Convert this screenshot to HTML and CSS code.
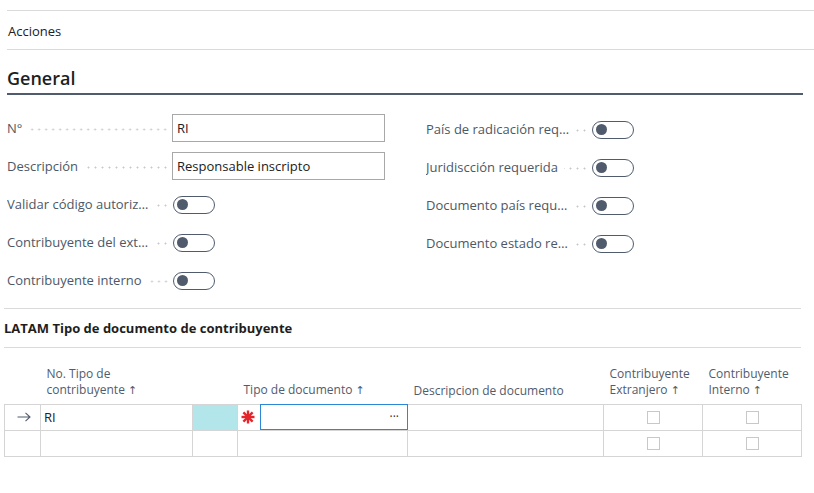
FILE: index.html
```html
<!DOCTYPE html>
<html lang="es">
<head>
<meta charset="utf-8">
<title>Tipo de contribuyente</title>
<link rel="stylesheet" href="styles.css">
</head>
<body>
<div class="page">
  <div class="actions">Acciones</div>

  <section class="general">
    <h2 class="section-title">General</h2>
    <div class="fields">
      <div class="col">
        <div class="field">
          <div class="label-wrap"><span class="label">N°</span><span class="leader"></span></div>
          <div class="input">RI</div>
        </div>
        <div class="field">
          <div class="label-wrap"><span class="label">Descripción</span><span class="leader"></span></div>
          <div class="input">Responsable inscripto</div>
        </div>
        <div class="field">
          <div class="label-wrap"><span class="label">Validar código autorización</span><span class="leader"></span></div>
          <span class="toggle"><span class="knob"></span></span>
        </div>
        <div class="field">
          <div class="label-wrap"><span class="label">Contribuyente del exterior</span><span class="leader"></span></div>
          <span class="toggle"><span class="knob"></span></span>
        </div>
        <div class="field">
          <div class="label-wrap"><span class="label">Contribuyente interno</span><span class="leader"></span></div>
          <span class="toggle"><span class="knob"></span></span>
        </div>
      </div>
      <div class="col">
        <div class="field">
          <div class="label-wrap"><span class="label">País de radicación requerido</span><span class="leader"></span></div>
          <span class="toggle"><span class="knob"></span></span>
        </div>
        <div class="field">
          <div class="label-wrap"><span class="label">Juridiscción requerida</span><span class="leader"></span></div>
          <span class="toggle"><span class="knob"></span></span>
        </div>
        <div class="field">
          <div class="label-wrap"><span class="label">Documento país requerido</span><span class="leader"></span></div>
          <span class="toggle"><span class="knob"></span></span>
        </div>
        <div class="field">
          <div class="label-wrap"><span class="label">Documento estado requerido</span><span class="leader"></span></div>
          <span class="toggle"><span class="knob"></span></span>
        </div>
      </div>
    </div>
  </section>

  <section class="lines">
    <h3 class="lines-title">LATAM Tipo de documento de contribuyente</h3>
    <table class="grid">
      <colgroup>
        <col class="c-sel"><col class="c-no"><col class="c-mark"><col class="c-tipo"><col class="c-desc"><col class="c-ext"><col class="c-int">
      </colgroup>
      <thead>
        <tr>
          <th></th>
          <th>No. Tipo de<br>contribuyente <span class="sort">↑</span></th>
          <th></th>
          <th>Tipo de documento <span class="sort">↑</span></th>
          <th>Descripcion de documento</th>
          <th>Contribuyente<br>Extranjero <span class="sort">↑</span></th>
          <th>Contribuyente<br>Interno <span class="sort">↑</span></th>
        </tr>
      </thead>
      <tbody>
        <tr>
          <td class="sel">
            <svg width="14" height="10" viewBox="0 0 14 10"><path d="M0.5 5H13M8.5 0.8L13 5L8.5 9.2" fill="none" stroke="#505c6d" stroke-width="1.1"/></svg>
          </td>
          <td class="txt">RI</td>
          <td class="mark"></td>
          <td class="tipo">
            <div class="tipo-wrap">
              <svg class="req" width="14" height="14" viewBox="0 0 14 14"><g stroke="#e3262c" stroke-width="2.4" stroke-linecap="butt"><path d="M7 0.5V13.5"/><path d="M0.5 7H13.5"/><path d="M2.4 2.4L11.6 11.6"/><path d="M11.6 2.4L2.4 11.6"/></g></svg>
              <div class="cell-input"><span class="more">···</span></div>
            </div>
          </td>
          <td></td>
          <td class="chk"><span class="box"></span></td>
          <td class="chk"><span class="box"></span></td>
        </tr>
        <tr>
          <td></td><td></td><td></td><td></td><td></td>
          <td class="chk"><span class="box"></span></td>
          <td class="chk"><span class="box"></span></td>
        </tr>
      </tbody>
    </table>
  </section>
</div>
</body>
</html>
```

FILE: styles.css
```css
* { box-sizing: border-box; }

body {
  margin: 0;
  background: #ffffff;
  color: #212121;
  font-family: "Open Sans", "Noto Sans", sans-serif;
  font-size: 13px;
}

.page {
  padding-top: 10px;
}

.actions {
  margin-left: 7px;
  height: 40px;
  border-top: 1px solid #dadada;
  border-bottom: 1px solid #dadada;
  display: flex;
  align-items: center;
  padding-left: 1px;
  padding-top: 1px;
  color: #212121;
}

.section-title {
  margin: 16px 11px 0 7px;
  font-size: 18px;
  font-weight: 600;
  line-height: 24px;
  padding-bottom: 3px;
  border-bottom: 2px solid #505c6d;
  color: #1e1e1e;
}

.fields {
  margin: 19px 0 0 7px;
  display: grid;
  grid-template-columns: 378px 1fr;
  column-gap: 41px;
}

.col {
  display: flex;
  flex-direction: column;
  gap: 10px;
}

.col + .col {
  padding-top: 1px;
}

.field {
  display: flex;
  align-items: center;
  height: 28px;
}

.label-wrap {
  width: 165px;
  flex: none;
  display: flex;
  align-items: center;
  padding-right: 3px;
}

.label {
  flex: 0 1 auto;
  min-width: 0;
  white-space: nowrap;
  overflow: hidden;
  text-overflow: ellipsis;
  color: #4d5766;
}

.leader {
  flex: 1 1 0;
  min-width: 12px;
  height: 3px;
  margin-left: 6px;
  margin-top: 3px;
  background-image: radial-gradient(circle, #c8c8c8 0.8px, transparent 1.2px);
  background-size: 7px 3px;
  background-position: right center;
  background-repeat: repeat-x;
}

.input {
  width: 213px;
  height: 28px;
  border: 1px solid #a8a8a8;
  padding-left: 4px;
  display: flex;
  align-items: center;
  color: #212121;
}

.toggle {
  position: relative;
  width: 42px;
  height: 18px;
  margin-left: 1px;
  margin-top: 1px;
  border: 1px solid #505c6d;
  border-radius: 9px;
  display: flex;
  align-items: center;
  padding-left: 3px;
}

.knob {
  width: 11px;
  height: 11px;
  border-radius: 50%;
  background: #505c6d;
}

.lines {
  margin: 14px 13px 0 4px;
  border-top: 1px solid #dadada;
}

.lines-title {
  margin: 0;
  height: 39px;
  border-bottom: 1px solid #dadada;
  display: flex;
  align-items: center;
  font-size: 13px;
  font-weight: 700;
  color: #1e1e1e;
}

.grid {
  width: 797px;
  border-collapse: collapse;
  table-layout: fixed;
}

.c-sel { width: 36px; }
.c-no { width: 152px; }
.c-mark { width: 45px; }
.c-tipo { width: 170px; }
.c-desc { width: 196px; }
.c-ext { width: 99px; }
.c-int { width: 99px; }

.grid th {
  height: 56px;
  vertical-align: bottom;
  text-align: left;
  font-weight: 400;
  font-size: 12px;
  line-height: 16px;
  color: #505c6d;
  padding: 0 4px 5px 6px;
}

.sort {
  font-family: "DejaVu Sans", sans-serif;
  font-size: 11px;
}

.grid td {
  height: 26px;
  border: 1px solid #d5d5d5;
  padding: 0;
  vertical-align: middle;
}

.grid td.sel {
  text-align: center;
  padding-left: 3px;
  line-height: 0;
}

.grid td.txt {
  padding-left: 3px;
  color: #212121;
}

.grid td.mark {
  background: #b3e6ea;
}

.tipo-wrap {
  display: flex;
  align-items: center;
  height: 25px;
}

.req {
  margin: 0 5px 0 3px;
  flex: none;
}

.cell-input {
  flex: 1;
  height: 26px;
  margin: -1px -1px 0 0;
  border: 1px solid #2b88d8;
  display: flex;
  align-items: center;
  justify-content: flex-end;
  padding-right: 8px;
}

.more {
  font-size: 12px;
  letter-spacing: 0;
  color: #333333;
}

.grid td.chk {
  text-align: center;
  line-height: 0;
}

.box {
  display: inline-block;
  width: 13px;
  height: 13px;
  border: 1px solid #c8c8c8;
  background: #fff;
}
```
